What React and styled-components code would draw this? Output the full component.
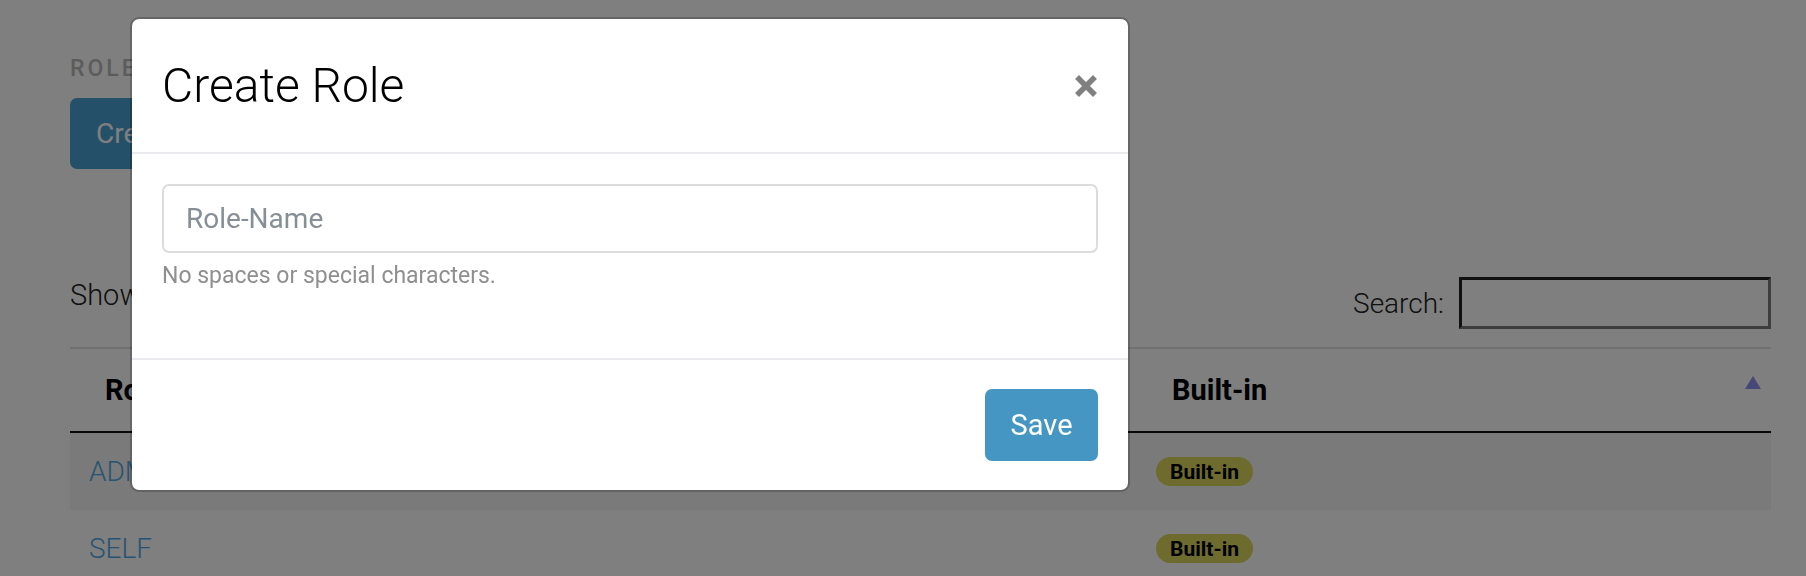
import React from 'react'
import styled, { createGlobalStyle } from 'styled-components'

const GlobalStyle = createGlobalStyle`
  html, body {
    margin: 0;
    padding: 0;
  }
  body {
    font-family: Roboto, "Liberation Sans", sans-serif;
    background: #ffffff;
    overflow: hidden;
  }
`

const Page = styled.div`
  height: 576px;
  box-sizing: border-box;
  padding: 54px 35px 0 70px;
`

const SectionLabel = styled.div`
  height: 30px;
  line-height: 30px;
  font-size: 23px;
  font-weight: 500;
  letter-spacing: 3px;
  text-transform: uppercase;
  color: #b8b8b8;
`

const CreateButton = styled.button`
  margin-top: 14px;
  height: 71px;
  padding: 0 26px;
  border: none;
  border-radius: 7px;
  background: #48a0d2;
  color: #ffffff;
  font-family: inherit;
  font-size: 28px;
  font-weight: 400;
`

const Toolbar = styled.div`
  margin-top: 108px;
  height: 52px;
  display: flex;
  justify-content: space-between;
`

const ShowText = styled.div`
  line-height: 37px;
  font-size: 29px;
  font-weight: 300;
  color: #222;
`

const SearchGroup = styled.label`
  display: flex;
  align-items: center;
  gap: 15px;
  font-size: 28px;
  font-weight: 300;
  color: #222;
`

const SearchInput = styled.input`
  width: 312px;
  height: 52px;
  box-sizing: border-box;
  border: 3px solid;
  border-color: #222 #7a7a7a #7a7a7a #222;
  background: #fff;
`

const Table = styled.div`
  margin-top: 18px;
  border-top: 2px solid #e0e0e0;
`

const Row = styled.div`
  display: grid;
  grid-template-columns: 1067px 1fr;
  height: ${p => (p.$head ? '82px' : '77px')};
  background: ${p => (p.$striped ? '#f4f4f4' : 'transparent')};
  border-bottom: ${p => (p.$head ? '2px solid #111' : 'none')};
`

const HeadCell = styled.div`
  position: relative;
  display: flex;
  align-items: center;
  padding-left: 35px;
  font-size: 29px;
  font-weight: 700;
  color: #000;
`

const SortArrow = styled.span`
  position: absolute;
  right: 10px;
  top: 27px;
  width: 0;
  height: 0;
  border-left: 8px solid transparent;
  border-right: 8px solid transparent;
  border-bottom: 13px solid #9090f0;
`

const Cell = styled.div`
  display: flex;
  align-items: center;
  padding-left: 19px;
`

const RoleLink = styled.a`
  font-size: 28px;
  font-weight: 300;
  color: #4ea8e6;
  text-decoration: none;
`

const Badge = styled.span`
  display: inline-flex;
  align-items: center;
  height: 29px;
  padding: 0 14px;
  border-radius: 15px;
  background: #ddd65c;
  color: #000;
  font-size: 21px;
  font-weight: 700;
`

const Backdrop = styled.div`
  position: fixed;
  inset: 0;
  background: rgba(0, 0, 0, 0.5);
`

const Modal = styled.div`
  position: fixed;
  left: 130px;
  top: 17px;
  width: 1000px;
  box-sizing: border-box;
  border: 2px solid rgba(0, 0, 0, 0.2);
  border-radius: 9px;
  background: #fff;
  background-clip: padding-box;
  display: flex;
  flex-direction: column;
`

const ModalHeader = styled.div`
  height: 135px;
  box-sizing: border-box;
  padding: 0 30px;
  border-bottom: 2px solid #e9e9ee;
  display: flex;
  align-items: center;
  justify-content: space-between;
`

const Title = styled.h2`
  margin: 0;
  font-size: 48px;
  font-weight: 300;
  color: #000;
`

const CloseButton = styled.button`
  display: flex;
  padding: 0;
  border: none;
  background: none;
`

const ModalBody = styled.div`
  padding: 30px 30px 65px 30px;
`

const NameInput = styled.input`
  display: block;
  width: 100%;
  height: 69px;
  box-sizing: border-box;
  padding: 0 22px;
  border: 2px solid #dcdcdc;
  border-radius: 7px;
  font-family: inherit;
  font-size: 28px;
  color: #222;
  &::placeholder {
    color: #868e96;
  }
`

const HelpText = styled.div`
  margin-top: 6px;
  line-height: 34px;
  font-size: 23px;
  color: #8f8f8f;
`

const ModalFooter = styled.div`
  height: 132px;
  box-sizing: border-box;
  padding-right: 30px;
  border-top: 2px solid #e9e9ee;
  display: flex;
  align-items: center;
  justify-content: flex-end;
`

const SaveButton = styled.button`
  width: 113px;
  height: 72px;
  border: none;
  border-radius: 7px;
  background: #4696c4;
  color: #fff;
  font-family: inherit;
  font-size: 29px;
  font-weight: 400;
`

const roles = ['ADMIN', 'SELF']

export default function App() {
  return (
    <>
      <GlobalStyle />
      <Page>
        <SectionLabel>Roles</SectionLabel>
        <CreateButton>Create Role</CreateButton>
        <Toolbar>
          <ShowText>Show 10 entries</ShowText>
          <SearchGroup>
            Search:
            <SearchInput type="search" />
          </SearchGroup>
        </Toolbar>
        <Table>
          <Row $head>
            <HeadCell>Role</HeadCell>
            <HeadCell>
              Built-in
              <SortArrow />
            </HeadCell>
          </Row>
          {roles.map((r, i) => (
            <Row key={r} $striped={i % 2 === 0}>
              <Cell>
                <RoleLink href="#">{r}</RoleLink>
              </Cell>
              <Cell>
                <Badge>Built-in</Badge>
              </Cell>
            </Row>
          ))}
        </Table>
      </Page>
      <Backdrop />
      <Modal>
        <ModalHeader>
          <Title>Create Role</Title>
          <CloseButton aria-label="Close">
            <svg width="24" height="24" viewBox="0 0 24 24">
              <path d="M3 3 L21 21 M21 3 L3 21" stroke="#808080" strokeWidth="5.5" />
            </svg>
          </CloseButton>
        </ModalHeader>
        <ModalBody>
          <NameInput placeholder="Role-Name" />
          <HelpText>No spaces or special characters.</HelpText>
        </ModalBody>
        <ModalFooter>
          <SaveButton>Save</SaveButton>
        </ModalFooter>
      </Modal>
    </>
  )
}
